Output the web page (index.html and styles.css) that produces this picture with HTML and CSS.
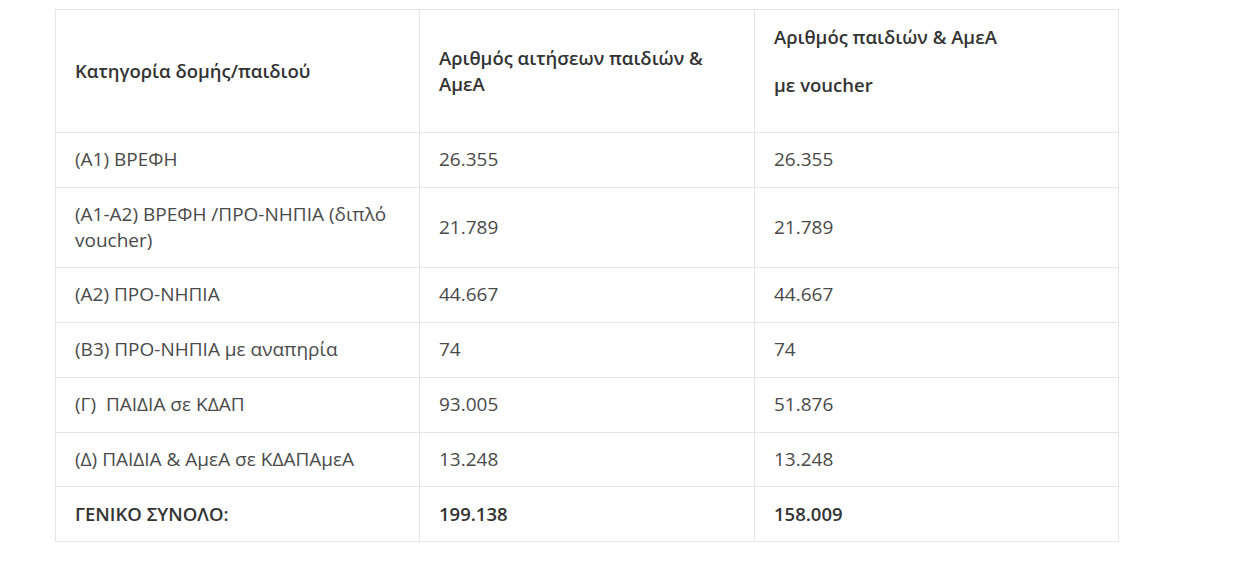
FILE: index.html
```html
<!DOCTYPE html>
<html lang="el">
<head>
<meta charset="utf-8">
<link rel="stylesheet" href="styles.css">
</head>
<body>
<div class="wrap">
<table class="data">
  <colgroup>
    <col class="c1"><col class="c2"><col class="c3">
  </colgroup>
  <thead>
    <tr>
      <th>Κατηγορία δομής/παιδιού</th>
      <th>Αριθμός αιτήσεων παιδιών &amp; ΑμεΑ</th>
      <th class="top"><p class="first">Αριθμός παιδιών &amp; ΑμεΑ</p><p>με voucher</p></th>
    </tr>
  </thead>
  <tbody>
    <tr><td>(Α1) ΒΡΕΦΗ</td><td>26.355</td><td>26.355</td></tr>
    <tr><td>(Α1-Α2) ΒΡΕΦΗ /ΠΡΟ-ΝΗΠΙΑ (διπλό voucher)</td><td>21.789</td><td>21.789</td></tr>
    <tr><td>(Α2) ΠΡΟ-ΝΗΠΙΑ</td><td>44.667</td><td>44.667</td></tr>
    <tr><td>(Β3) ΠΡΟ-ΝΗΠΙΑ με αναπηρία</td><td>74</td><td>74</td></tr>
    <tr><td>(Γ)&nbsp; ΠΑΙΔΙΑ σε ΚΔΑΠ</td><td>93.005</td><td>51.876</td></tr>
    <tr><td>(Δ) ΠΑΙΔΙΑ &amp; ΑμεΑ σε ΚΔΑΠΑμεΑ</td><td>13.248</td><td>13.248</td></tr>
    <tr class="total"><td>ΓΕΝΙΚΟ ΣΥΝΟΛΟ:</td><td>199.138</td><td>158.009</td></tr>
  </tbody>
</table>
</div>
</body>
</html>
```
FILE: styles.css
```css
html, body {
  margin: 0;
  padding: 0;
  background: #ffffff;
}
.wrap {
  padding: 9px 0 0 55px;
}
.data {
  border-collapse: collapse;
  width: 1063px;
  table-layout: fixed;
  font-family: "Open Sans", "Noto Sans", sans-serif;
  font-size: 19px;
  line-height: 25.75px;
  color: #4a4a4a;
}
.c1 { width: 364px; }
.c2 { width: 335px; }
.c3 { width: 364px; }
.data th, .data td {
  border: 1px solid #e6e6e6;
  padding: 14px 19px;
  text-align: left;
  vertical-align: middle;
}
.data th {
  font-weight: 600;
  font-size: 18.5px;
  line-height: 26px;
  color: #333333;
}
.data th.top {
  vertical-align: top;
}
.data th p {
  margin: 0 0 20px;
}
.data th p.first {
  margin-bottom: 22px;
}
.total td {
  font-weight: 600;
  font-size: 18.5px;
  color: #333333;
}
```
